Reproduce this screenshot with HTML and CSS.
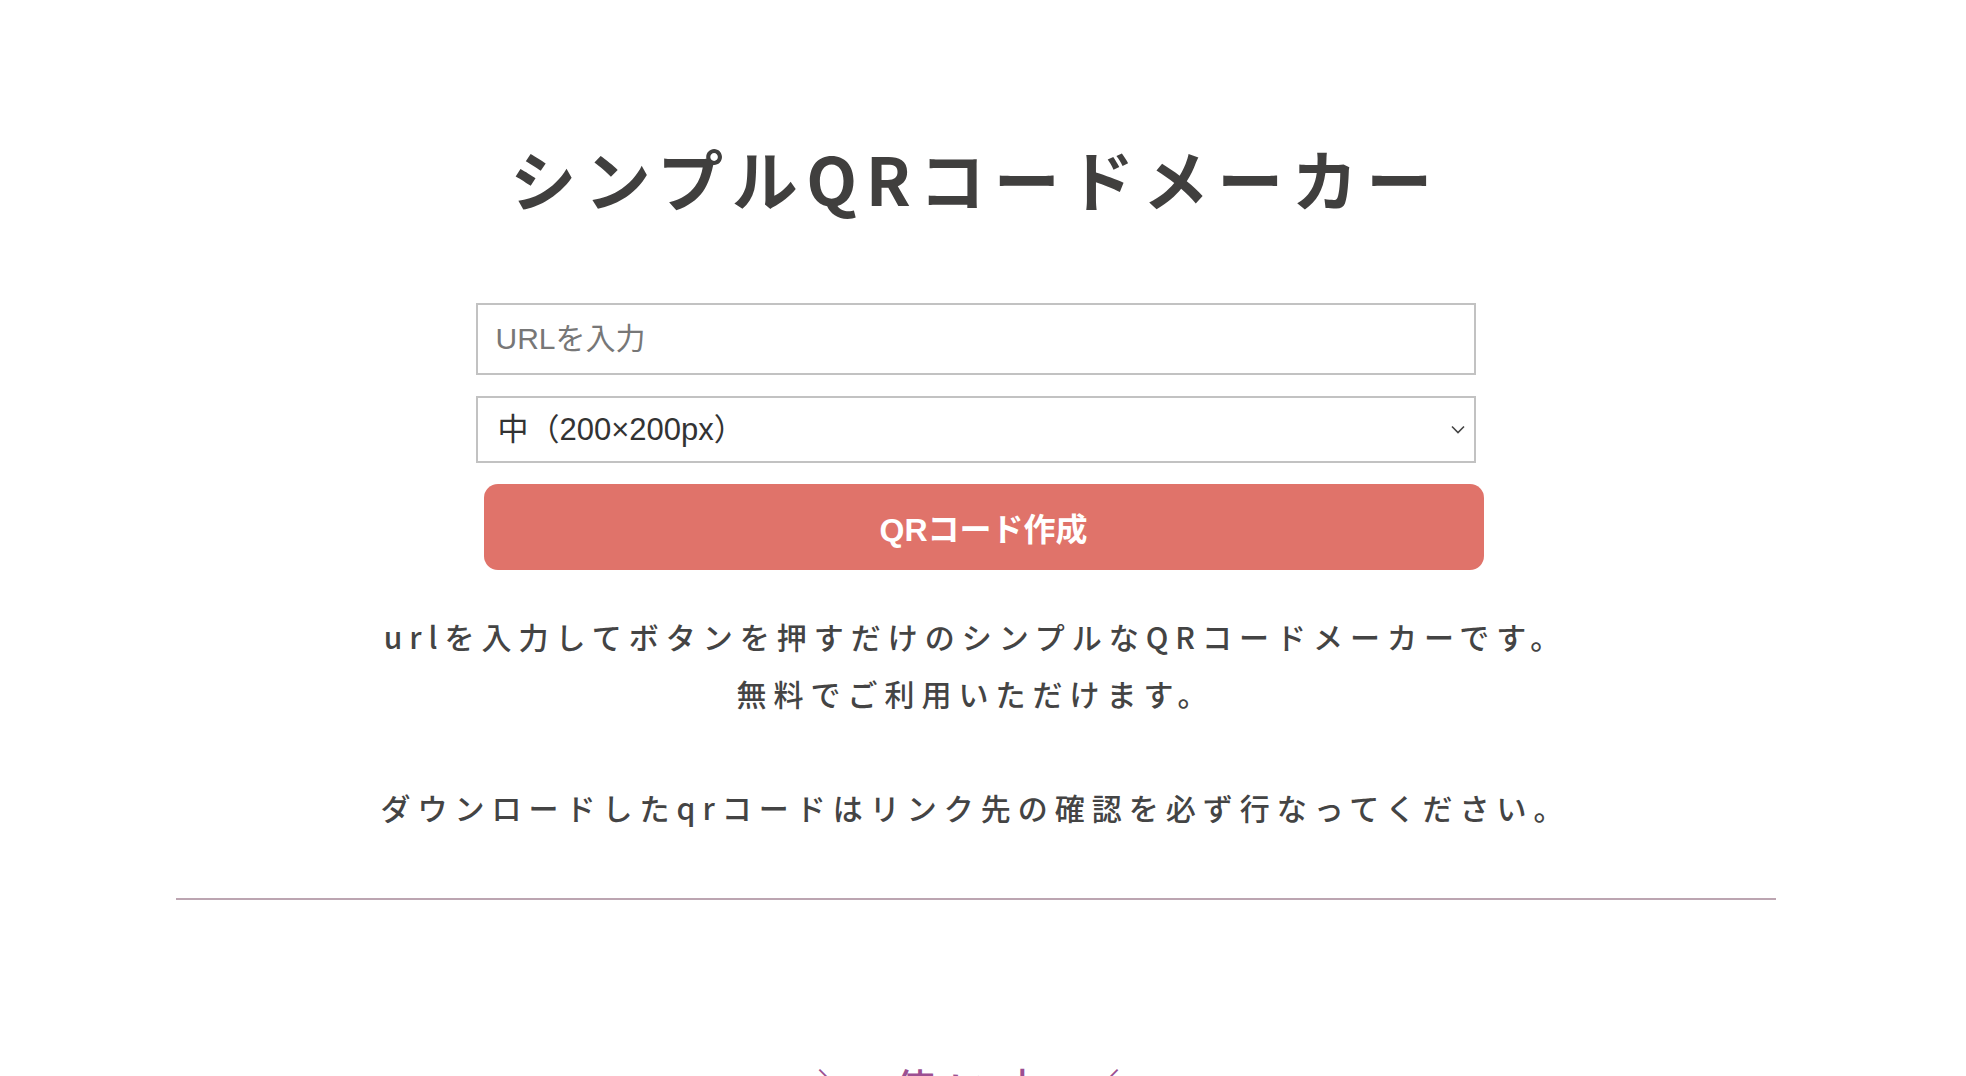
FILE: index.html
```html
<!DOCTYPE html>
<html lang="ja">
<head>
    <meta charset="UTF-8">
    <meta name="viewport" content="width=device-width, initial-scale=1.0">
    <title>シンプルQRコードメーカー</title>
    <link rel="stylesheet" href="styles.css">
</head>
<body>
    <div class="page">
        <h1 class="title">シンプルQRコードメーカー</h1>

        <form class="qr-form">
            <input type="text" class="qr-input" placeholder="URLを入力">
            <div class="select-wrap">
                <select class="qr-size">
                    <option>小（100×100px）</option>
                    <option selected>中（200×200px）</option>
                    <option>大（300×300px）</option>
                </select>
                <svg class="select-arrow" width="14" height="9" viewBox="0 0 14 9">
                    <path d="M1 1.5 L7 7.5 L13 1.5" fill="none" stroke="#444" stroke-width="1.6"/>
                </svg>
            </div>
            <button type="submit" class="qr-button">QRコード作成</button>
        </form>

        <p class="lead">
            urlを入力してボタンを押すだけのシンプルなQRコードメーカーです。<br>
            無料でご利用いただけます。<br>
            <br>
            ダウンロードしたqrコードはリンク先の確認を必ず行なってください。
        </p>

        <hr class="divider">

        <h2 class="section-title">＼ 使い方 ／</h2>
    </div>
</body>
</html>
```

FILE: styles.css
```css
* {
    box-sizing: border-box;
}

body {
    margin: 0;
    padding-right: 15px;
    background-color: #fff;
    color: #444;
    font-family: 'Noto Sans CJK JP', 'Noto Sans', sans-serif;
}

.page {
    width: 1600px;
    margin: 0 auto;
}

.title {
    margin: 128px 0 76px;
    font-size: 66px;
    font-weight: 700;
    line-height: 99px;
    letter-spacing: 8.5px;
    text-align: center;
    color: #403f3e;
}

.qr-form {
    width: 1000px;
    margin: 0 auto;
}

.qr-input {
    display: block;
    width: 100%;
    height: 72px;
    padding: 0 18px;
    border: 2px solid #c2c2c2;
    border-radius: 0;
    font-family: 'Liberation Sans', 'Noto Sans CJK JP', sans-serif;
    font-size: 30px;
    color: #333;
    outline: none;
}

.qr-input::placeholder {
    color: #777;
}

.select-wrap {
    position: relative;
    margin-top: 21px;
}

.qr-size {
    display: block;
    width: 100%;
    height: 67px;
    padding: 0 20px;
    border: 2px solid #c2c2c2;
    border-radius: 0;
    background-color: #fff;
    appearance: none;
    -webkit-appearance: none;
    font-family: 'Liberation Sans', 'Noto Sans CJK JP', sans-serif;
    font-size: 31px;
    color: #333;
    outline: none;
}

.select-arrow {
    position: absolute;
    right: 11px;
    top: 29px;
    pointer-events: none;
}

.qr-button {
    display: block;
    width: 1000px;
    height: 86px;
    margin: 21px 0 0 8px;
    border: none;
    border-radius: 14px;
    background-color: #e0736a;
    color: #fff;
    font-family: 'Liberation Sans', 'Noto Sans CJK JP', sans-serif;
    font-size: 32px;
    font-weight: 700;
    cursor: pointer;
}

.lead {
    margin: 38px 0 0;
    font-size: 30px;
    font-weight: 500;
    line-height: 57px;
    letter-spacing: 7px;
    text-align: center;
    color: #444;
}

.divider {
    margin: 62px 0 0;
    border: none;
    border-top: 2px solid #bca5b1;
}

.section-title {
    margin: 156px 0 0;
    font-size: 40px;
    font-weight: 500;
    line-height: 60px;
    letter-spacing: 14px;
    text-align: center;
    color: #9c4f92;
}
```
